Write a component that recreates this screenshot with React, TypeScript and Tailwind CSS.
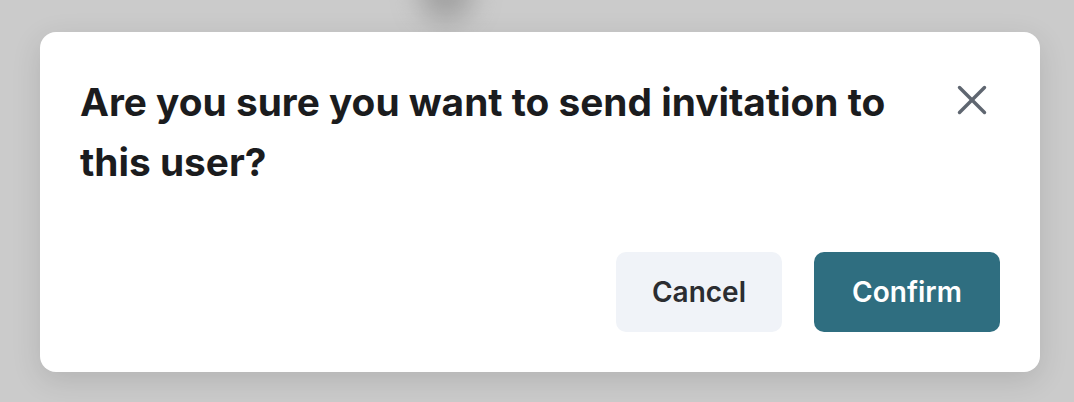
import { X } from "lucide-react";

const App = () => {
  return (
    <div
      className="relative w-[1074px] h-[402px] overflow-hidden bg-[#cbcbcb] pt-[32px] px-[40px]"
      style={{ fontFamily: "Inter, 'Liberation Sans', sans-serif" }}
    >
      {/* something behind the overlay */}
      <div className="absolute left-[418px] top-[-34px] w-[56px] h-[56px] rounded-full bg-[#8f8f8f] blur-[14px] opacity-70" />

      <div className="relative w-[1000px] rounded-[16px] bg-white p-[40px] shadow-[0_8px_30px_rgba(0,0,0,0.12)]">
        <div className="flex items-start justify-between gap-6">
          <h2 className="max-w-[860px] text-[38.8px] leading-[60px] font-bold text-[#1b1c1e]">
            Are you sure you want to send invitation to this user?
          </h2>
          <button className="mt-[3px] mr-[3px] text-[#5f6670]">
            <X size={50} strokeWidth={1.65} />
          </button>
        </div>

        <div className="mt-[60px] flex justify-end gap-[32px]">
          <button className="w-[166px] h-[80px] rounded-[10px] bg-[#f0f3f8] text-[28px] font-semibold text-[#2b2d31]">
            Cancel
          </button>
          <button className="w-[186px] h-[80px] rounded-[10px] bg-[#2f6e80] text-[28px] font-semibold text-white">
            Confirm
          </button>
        </div>
      </div>
    </div>
  );
};

export default App;
